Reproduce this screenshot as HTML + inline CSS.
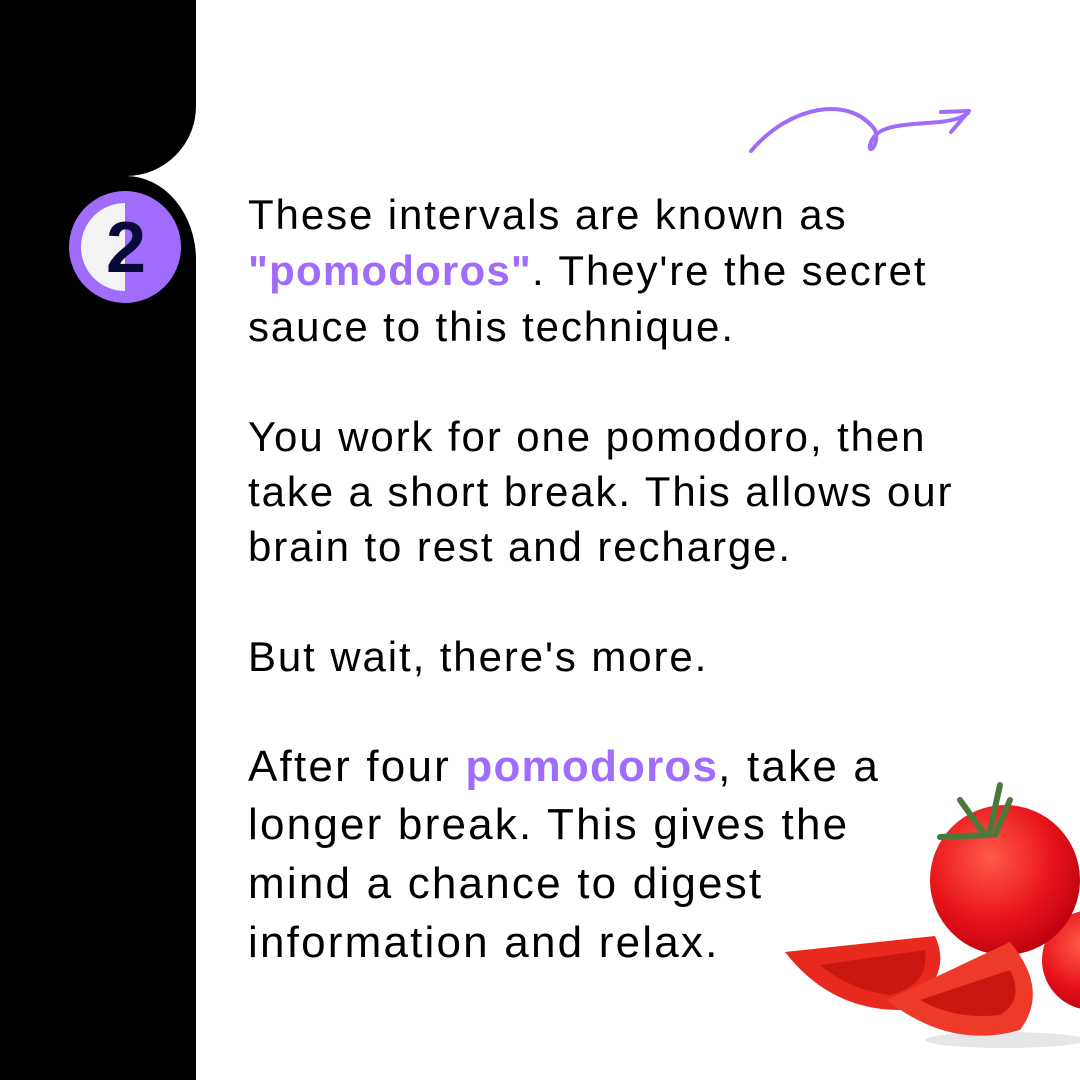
<!DOCTYPE html>
<html><head><meta charset="utf-8"><style>
html,body{margin:0;padding:0;background:#fff}
body{width:1080px;height:1080px;position:relative;overflow:hidden;font-family:"Liberation Sans",sans-serif;color:#000}
.l{position:absolute;left:248px;font-size:42px;white-space:nowrap;letter-spacing:1.9px;line-height:1}
.b{font-size:44px;letter-spacing:2.2px}
.p{color:#a06cfc;font-weight:bold;letter-spacing:1.2px}
</style></head><body>
<svg width="1080" height="1080" style="position:absolute;left:0;top:0">
<path d="M0 0 H196 V105 A70 70 0 0 1 126 176 A70 84 0 0 1 196 260 V1080 H0 Z" fill="#000"/>
<circle cx="125" cy="247" r="56" fill="#a06cfc"/>
<path d="M125 203 A44 44 0 0 0 125 291 Z" fill="#f3f3f3"/>
<text x="126" y="272" text-anchor="middle" font-family="Liberation Sans" font-weight="bold" font-size="72" fill="#0a0a3a">2</text>
<path d="M751 151 C790 105 850 95 875 130 C880 145 868 155 870 145 C875 125 900 125 940 122 C955 120 962 118 968 113" stroke="#a06cfc" stroke-width="4" fill="none" stroke-linecap="round"/>
<path d="M941 112 L969 111 L951 132" stroke="#a06cfc" stroke-width="4" fill="none" stroke-linecap="round" stroke-linejoin="round"/>
<defs><radialGradient id="t" cx="0.4" cy="0.35" r="0.7"><stop offset="0" stop-color="#ff5a4a"/><stop offset="0.6" stop-color="#e8141a"/><stop offset="1" stop-color="#b8000e"/></radialGradient></defs>
<ellipse cx="1005" cy="1040" rx="80" ry="8" fill="#e6e6e6"/>
<circle cx="1092" cy="960" r="50" fill="url(#t)"/>
<circle cx="1005" cy="880" r="75" fill="url(#t)"/>
<path d="M985 835 L960 800 M990 830 L1000 785 M990 835 L940 837 M995 835 L1010 800" stroke="#4a7a3a" stroke-width="6" stroke-linecap="round"/>
<path d="M785 952 L935 936 Q955 980 900 1010 Q830 1010 785 952 Z" fill="#e82a1e"/>
<path d="M820 965 L925 950 Q930 985 890 995 Q850 990 820 965 Z" fill="#c81810"/>
<path d="M887 1000 L1010 942 Q1050 990 1020 1030 Q950 1050 887 1000 Z" fill="#ee3a28"/>
<path d="M920 1000 L1010 970 Q1025 1000 1000 1015 Q955 1020 920 1000 Z" fill="#c81810"/>
</svg>
<div class="l" style="top:194px">These intervals are known as</div>
<div class="l" style="top:250px"><span class="p">"pomodoros"</span>. They're the secret</div>
<div class="l" style="top:306px">sauce to this technique.</div>
<div class="l" style="top:416px">You work for one pomodoro, then</div>
<div class="l" style="top:471px">take a short break. This allows our</div>
<div class="l" style="top:526px">brain to rest and recharge.</div>
<div class="l" style="top:636px">But wait, there's more.</div>
<div class="l b" style="top:745px">After four <span class="p">pomodoros</span>, take a</div>
<div class="l b" style="top:803px">longer break. This gives the</div>
<div class="l b" style="top:862px">mind a chance to digest</div>
<div class="l b" style="top:921px">information and relax.</div>
</body></html>
